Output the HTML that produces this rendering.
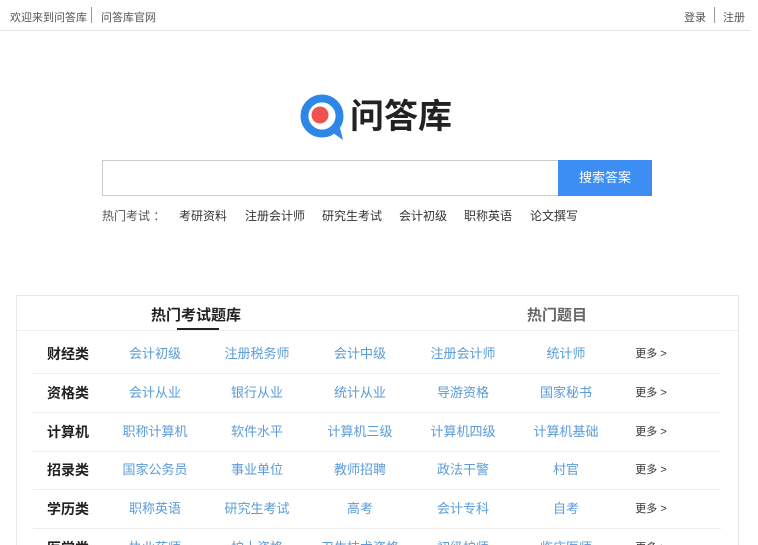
<!DOCTYPE html>
<html><head><meta charset="utf-8"><style>
*{margin:0;padding:0;box-sizing:border-box}
html,body{width:758px;height:545px;overflow:hidden}
body{background:#fff;font-family:"Liberation Sans","Noto Sans CJK SC",sans-serif;color:#333;position:relative}
.a{position:absolute;white-space:nowrap}
.top{position:absolute;left:0;top:0;width:750px;height:31px;border-bottom:1px solid #e4e4e4;font-size:11px;color:#555}
.sep{position:absolute;width:1px;height:16px;background:#999;top:7px}
.box{position:absolute;left:16px;top:295px;width:723px;height:250px;border:1px solid #e8e8e8;border-bottom:none}
.row{position:absolute;left:33px;width:688px;height:39px;border-bottom:1px solid #eee}
.row span{position:absolute;top:0;line-height:38px;font-size:13px;color:#5a9bd8;transform:translateX(-50%);white-space:nowrap}
.row .c{font-weight:bold;color:#222;font-size:14px}
.row .m{color:#333;font-size:11px}
</style></head><body>
<div class="top">
<span class="a" style="left:10px;top:9px">欢迎来到问答库</span><div class="sep" style="left:91px"></div>
<span class="a" style="left:101px;top:9px">问答库官网</span>
<span class="a" style="left:684px;top:9px">登录</span><div class="sep" style="left:714px"></div>
<span class="a" style="left:723px;top:9px">注册</span>
</div>
<svg class="a" style="left:299px;top:94px" width="50" height="48" viewBox="0 0 50 48">
<path d="M30 36 L44 46 L40 30Z" fill="#2e86e6"/>
<circle cx="23" cy="22" r="17.5" fill="none" stroke="#2e86e6" stroke-width="8"/>
<circle cx="23" cy="22" r="13.5" fill="#fff"/>
<circle cx="21" cy="21" r="8.5" fill="#ef5350"/>
</svg>
<span class="a" style="left:350px;top:97px;font-size:34px;font-weight:bold;color:#222;line-height:40px">问答库</span>
<div class="a" style="left:102px;top:160px;width:457px;height:36px;border:1px solid #ccc"></div>
<div class="a" style="left:558px;top:160px;width:94px;height:36px;background:#3d8ef2;color:#fff;font-size:13px;line-height:36px;text-align:center">搜索答案</div>
<div class="a" style="left:102px;top:207px;font-size:12px;color:#555">热门考试 ：</div>
<div class="a" style="left:179px;top:207px;font-size:12px;color:#333">考研资料</div>
<div class="a" style="left:245px;top:207px;font-size:12px;color:#333">注册会计师</div>
<div class="a" style="left:322px;top:207px;font-size:12px;color:#333">研究生考试</div>
<div class="a" style="left:399px;top:207px;font-size:12px;color:#333">会计初级</div>
<div class="a" style="left:464px;top:207px;font-size:12px;color:#333">职称英语</div>
<div class="a" style="left:530px;top:207px;font-size:12px;color:#333">论文撰写</div>
<div class="box">
<div class="a" style="left:0;top:34px;width:721px;height:1px;background:#eee"></div>
<span class="a" style="left:134px;top:8px;font-size:15px;font-weight:bold;color:#222">热门考试题库</span>
<div class="a" style="left:160px;top:32px;width:42px;height:2px;background:#222"></div>
<span class="a" style="left:510px;top:8px;font-size:15px;font-weight:bold;color:#666">热门题目</span>
</div>
<div class="row" style="top:335px"><span class="c" style="left:35px">财经类</span><span style="left:122px">会计初级</span><span style="left:224px">注册税务师</span><span style="left:327px">会计中级</span><span style="left:430px">注册会计师</span><span style="left:533px">统计师</span><span class="m" style="left:618px">更多 &gt;</span></div>
<div class="row" style="top:374px"><span class="c" style="left:35px">资格类</span><span style="left:122px">会计从业</span><span style="left:224px">银行从业</span><span style="left:327px">统计从业</span><span style="left:430px">导游资格</span><span style="left:533px">国家秘书</span><span class="m" style="left:618px">更多 &gt;</span></div>
<div class="row" style="top:413px"><span class="c" style="left:35px">计算机</span><span style="left:122px">职称计算机</span><span style="left:224px">软件水平</span><span style="left:327px">计算机三级</span><span style="left:430px">计算机四级</span><span style="left:533px">计算机基础</span><span class="m" style="left:618px">更多 &gt;</span></div>
<div class="row" style="top:451px"><span class="c" style="left:35px">招录类</span><span style="left:122px">国家公务员</span><span style="left:224px">事业单位</span><span style="left:327px">教师招聘</span><span style="left:430px">政法干警</span><span style="left:533px">村官</span><span class="m" style="left:618px">更多 &gt;</span></div>
<div class="row" style="top:490px"><span class="c" style="left:35px">学历类</span><span style="left:122px">职称英语</span><span style="left:224px">研究生考试</span><span style="left:327px">高考</span><span style="left:430px">会计专科</span><span style="left:533px">自考</span><span class="m" style="left:618px">更多 &gt;</span></div>
<div class="row" style="top:529px;height:16px;border:none;overflow:hidden"><span class="c" style="left:35px">医学类</span><span style="left:122px">执业药师</span><span style="left:224px">护士资格</span><span style="left:327px">卫生技术资格</span><span style="left:430px">初级护师</span><span style="left:533px">临床医师</span><span class="m" style="left:618px">更多 &gt;</span></div>
</body></html>
